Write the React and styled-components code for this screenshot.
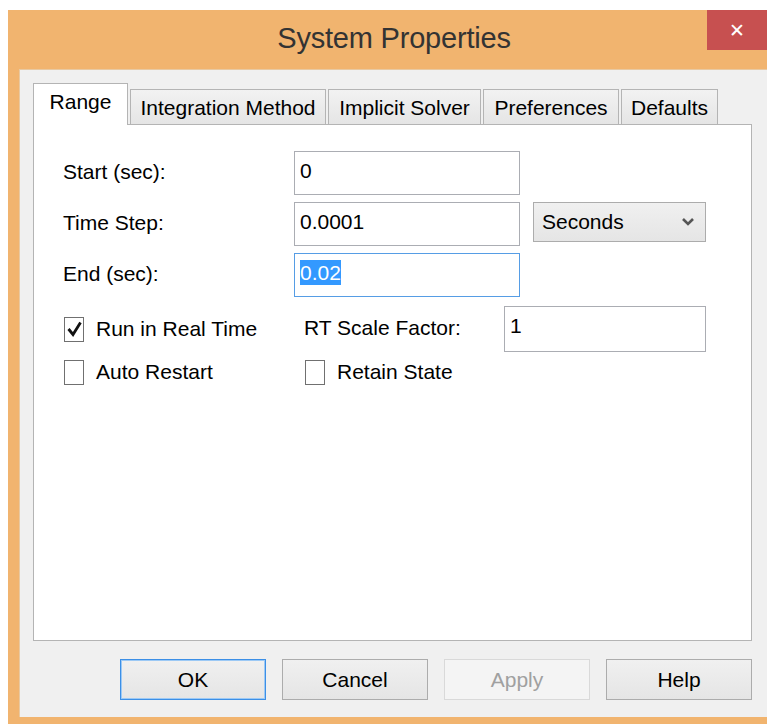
import React from "react";
import styled, { createGlobalStyle, css } from "styled-components";

const UI_FONT = `"Liberation Sans", Arial, sans-serif`;
const TEXT_SIZE = 21;

const GlobalStyle = createGlobalStyle`
  html, body {
    margin: 0;
    padding: 0;
    background: #ffffff;
    overflow: hidden;
  }
  body {
    font-family: ${UI_FONT};
    font-size: ${TEXT_SIZE}px;
    color: #000;
  }
`;

const TABS = [
  { label: "Range", width: 95 },
  { label: "Integration Method", width: 196 },
  { label: "Implicit Solver", width: 153 },
  { label: "Preferences", width: 136 },
  { label: "Defaults", width: 97 },
];

const BUTTONS = [
  { label: "OK", variant: "default" },
  { label: "Cancel" },
  { label: "Apply", variant: "disabled" },
  { label: "Help" },
];

const ChevronDown = () => (
  <svg width="14" height="10" viewBox="0 0 14 10">
    <polyline points="2,2 7,7 12,2" fill="none" stroke="#555" strokeWidth="2.6" />
  </svg>
);

const CheckMark = () => (
  <svg width="17" height="20" viewBox="0 0 17 20">
    <polyline points="2.5,10 7,15.5 14.5,3.5" fill="none" stroke="#111" strokeWidth="2.8" />
  </svg>
);

const CheckBox = ({ checked, label }) => (
  <CheckRow>
    <Box>{checked && <CheckMark />}</Box>
    <span>{label}</span>
  </CheckRow>
);

const App = () => {
  return (
    <>
      <GlobalStyle />
      <Window>
        <TitleBar>
          <Title>System Properties</Title>
          <CloseButton>&#x2715;</CloseButton>
        </TitleBar>

        <Client>
          <TabStrip>
            {TABS.map((tab, i) => (
              <Tab key={tab.label} $width={tab.width} $selected={i === 0}>
                {tab.label}
              </Tab>
            ))}
          </TabStrip>

          <Panel>
            <RangeGrid>
              <Label>Start (sec):</Label>
              <Field>0</Field>
              <span />

              <Label>Time Step:</Label>
              <Field>0.0001</Field>
              <Select>
                <span>Seconds</span>
                <ChevronDown />
              </Select>

              <Label>End (sec):</Label>
              <Field $focused>
                <Selected>0.02</Selected>
              </Field>
              <span />
            </RangeGrid>

            <OptionsGrid>
              <CheckBox checked label="Run in Real Time" />
              <Label>RT Scale Factor:</Label>
              <Field $short>1</Field>

              <CheckBox label="Auto Restart" />
              <CheckBox label="Retain State" />
            </OptionsGrid>
          </Panel>

          <ButtonRow>
            {BUTTONS.map((b) => (
              <DialogButton key={b.label} $variant={b.variant}>
                {b.label}
              </DialogButton>
            ))}
          </ButtonRow>
        </Client>
      </Window>
    </>
  );
};

// The window is wider than the viewport, its right frame runs off the page.
const Window = styled.div`
  box-sizing: border-box;
  width: 772px;
  margin: 10px 0 0 8px;
  padding: 0 11px 11px;
  background: #f1b46f;
`;

const TitleBar = styled.div`
  display: grid;
  height: 59px;

  & > * {
    grid-area: 1 / 1;
  }
`;

const Title = styled.div`
  justify-self: center;
  align-self: center;
  margin-top: -2px;
  font-size: 29px;
  color: #333;
  letter-spacing: -0.2px;
`;

const CloseButton = styled.div`
  justify-self: end;
  align-self: start;
  display: flex;
  align-items: center;
  justify-content: center;
  width: 60px;
  height: 40px;
  margin-right: 2px;
  background: #c75050;
  color: #fff;
  font-family: "DejaVu Sans", sans-serif;
  font-size: 19px;
  font-weight: bold;
`;

const Client = styled.div`
  box-sizing: border-box;
  height: 648px;
  padding: 14px 17px 0 13px;
  background: #f0f0f0;
  border-top: 1px solid #e8c9a2;
  border-left: 1px solid #e8c9a2;
`;

const TabStrip = styled.div`
  position: relative;
  z-index: 1;
  display: flex;
  align-items: flex-end;
  gap: 2px;
  height: 41px;
  margin-bottom: -1px;
`;

const Tab = styled.div`
  box-sizing: border-box;
  display: flex;
  align-items: center;
  justify-content: center;
  width: ${(props) => props.$width}px;
  height: 36px;
  border: 1px solid #b4b4b4;
  background: linear-gradient(#f2f2f2, #e5e5e5);
  padding-top: 1px;

  ${(props) => props.$selected && css`
    height: 42px;
    border-bottom: none;
    background: #ffffff;
    padding-bottom: 6px;
  `}
`;

const Panel = styled.div`
  box-sizing: border-box;
  height: 517px;
  padding: 26px 0 0 29px;
  background: #ffffff;
  border: 1px solid #b4b4b4;
`;

const RangeGrid = styled.div`
  display: grid;
  grid-template-columns: 218px 226px 173px;
  grid-template-rows: 44px 44px 44px;
  column-gap: 13px;
  row-gap: 7px;
  align-items: center;
`;

const OptionsGrid = styled.div`
  display: grid;
  grid-template-columns: 241px 200px 202px;
  grid-template-rows: 46px 40px;
  align-items: center;
  margin-top: 9px;
`;

const Label = styled.div`
  padding-bottom: 2px;
`;

const Field = styled.div`
  box-sizing: border-box;
  height: ${(props) => (props.$short ? 46 : 44)}px;
  align-self: stretch;
  padding: 6px 5px 0;
  background: #ffffff;
  border: 1px solid ${(props) => (props.$focused ? "#569de5" : "#abadb3")};
  line-height: 26px;
`;

const Selected = styled.span`
  background: #3399ff;
  color: #ffffff;
  padding: 1px 0;
`;

const Select = styled.div`
  box-sizing: border-box;
  display: flex;
  align-items: center;
  justify-content: space-between;
  height: 40px;
  align-self: start;
  padding: 0 10px 0 8px;
  border: 1px solid #acacac;
  background: linear-gradient(#f0f0f0, #e5e5e5);
`;

const CheckRow = styled.div`
  display: flex;
  align-items: center;
  gap: 12px;
`;

const Box = styled.span`
  box-sizing: border-box;
  display: flex;
  align-items: center;
  justify-content: center;
  width: 20px;
  height: 25px;
  margin-left: 1px;
  border: 1px solid #707070;
  background: #ffffff;
`;

const ButtonRow = styled.div`
  display: flex;
  justify-content: flex-end;
  gap: 16px;
  margin-top: 18px;
`;

const DialogButton = styled.div`
  box-sizing: border-box;
  display: flex;
  align-items: center;
  justify-content: center;
  width: 146px;
  height: 41px;
  border: 1px solid #acacac;
  background: linear-gradient(#f0f0f0, #e5e5e5);

  ${(props) => props.$variant === "default" && css`
    border-color: #3c8fe6;
    box-shadow: inset 0 0 0 1px #9cc9f5;
  `}

  ${(props) => props.$variant === "disabled" && css`
    border-color: #d9d9d9;
    background: #f4f4f4;
    color: #a0a0a0;
  `}
`;

export default App;
